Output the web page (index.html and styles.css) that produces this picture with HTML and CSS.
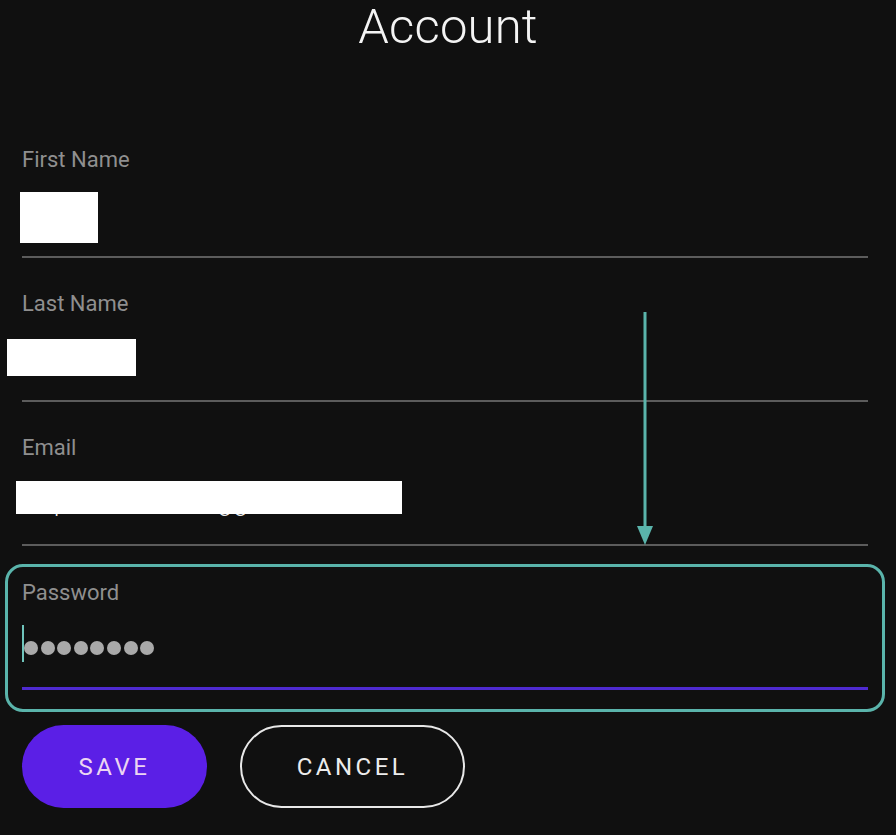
FILE: index.html
```html
<!DOCTYPE html>
<html lang="en">
<head>
<meta charset="utf-8">
<title>Account</title>
<link rel="stylesheet" href="styles.css">
</head>
<body>
<div class="page">
  <h1 class="title">Account</h1>
  <form class="form">
    <div class="field">
      <label class="label">First Name</label>
      <div class="value"><span class="redact redact-first"></span></div>
    </div>
    <div class="field">
      <label class="label">Last Name</label>
      <div class="value"><span class="redact redact-last"></span></div>
    </div>
    <div class="field">
      <label class="label">Email</label>
      <div class="value email-value"><span class="email-text"><span class="em-a">p</span><span class="em-b">gg</span></span><span class="redact redact-email"></span></div>
    </div>
    <div class="field field-focus">
      <label class="label">Password</label>
      <div class="value pw-value"><span class="caret"></span><span class="dots"><i></i><i></i><i></i><i></i><i></i><i></i><i></i><i></i></span></div>
    </div>
    <div class="actions">
      <button type="button" class="btn btn-save">SAVE</button>
      <button type="button" class="btn btn-cancel">CANCEL</button>
    </div>
  </form>
  <svg class="arrow" width="20" height="240" viewBox="0 0 20 240" aria-hidden="true">
    <line x1="10" y1="0" x2="10" y2="220" stroke="#5ab4ab" stroke-width="3"/>
    <polygon points="2,214 18,214 10,233" fill="#5ab4ab"/>
  </svg>
</div>
</body>
</html>
```
FILE: styles.css
```css
* { box-sizing: border-box; }
html, body {
  margin: 0;
  padding: 0;
  background: #101010;
}
body {
  font-family: Roboto, "Noto Sans", "Liberation Sans", sans-serif;
  color: #f2f2f2;
}
.page {
  position: relative;
  width: 896px;
  height: 835px;
  overflow: hidden;
}
.title {
  margin: 0;
  padding-top: 0;
  text-align: center;
  font-weight: 300;
  font-size: 49px;
  line-height: 54px;
  color: #f4f4f4;
  letter-spacing: 0.2px;
}
.form {
  margin: 60px 28px 0 22px;
}
.field {
  height: 144px;
  border-bottom: 2px solid #5c5c5c;
  padding-top: 34px;
  position: relative;
}
.label {
  display: block;
  font-size: 22px;
  line-height: 24px;
  color: #8f8f8f;
  font-weight: 400;
}
.value {
  height: 60px;
  margin-top: 12px;
  position: relative;
}
.redact {
  display: block;
  background: #ffffff;
}
.redact-first {
  width: 78px;
  height: 51px;
  margin-left: -2px;
  margin-top: 20px;
}
.redact-last {
  width: 129px;
  height: 37px;
  margin-left: -15px;
  margin-top: 23px;
}
.email-value { position: relative; }
.email-text {
  position: absolute;
  left: 0;
  top: 16px;
  display: flex;
  font-size: 25px;
  font-weight: 300;
  color: #f0f0f0;
}
.em-a { margin-left: 32px; }
.em-b { margin-left: 150px; letter-spacing: 2px; }
.redact-email {
  position: absolute;
  left: -6px;
  top: 9px;
  width: 386px;
  height: 33px;
}
.field-focus {
  border-bottom: 3px solid #4e2ad0;
  padding-top: 35px;
}
.field-focus::after {
  content: "";
  position: absolute;
  left: -17px;
  right: -17px;
  top: 18px;
  bottom: -25px;
  border: 3px solid #5ab4ab;
  border-radius: 18px;
  pointer-events: none;
}
.pw-value {
  display: flex;
  align-items: center;
  margin-top: 23px;
  height: 40px;
}
.caret {
  width: 2px;
  height: 37px;
  background: #6fc4bb;
  margin-right: 0;
  margin-bottom: 9px;
}
.dots {
  display: flex;
  gap: 2.6px;
}
.dots i {
  display: block;
  width: 14px;
  height: 14px;
  border-radius: 50%;
  background: #a9a9a9;
}
.actions {
  display: flex;
  gap: 33px;
  margin-top: 35px;
}
.btn {
  height: 83px;
  border-radius: 42px;
  font-family: Roboto, "Noto Sans", sans-serif;
  font-size: 24px;
  letter-spacing: 3.5px;
  font-weight: 400;
  cursor: pointer;
}
.btn-save {
  width: 185px;
  background: #5b1fe6;
  border: none;
  color: #ecd5f2;
}
.btn-cancel {
  width: 225px;
  background: transparent;
  border: 2px solid #e8e8e8;
  color: #ececec;
}
.arrow {
  position: absolute;
  left: 635px;
  top: 312px;
}
```
